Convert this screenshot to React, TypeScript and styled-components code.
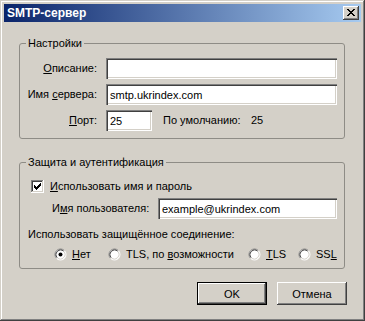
import React from 'react';
import styled, { createGlobalStyle } from 'styled-components';

const Global = createGlobalStyle`
  html, body { margin: 0; padding: 0; background: #d4d0c8; }
  body {
    font-family: "Liberation Sans", Arial, sans-serif;
    font-size: 11px;
    color: #000;
    -webkit-font-smoothing: none;
  }
  * { box-sizing: border-box; }
`;

const Window = styled.div`
  width: 365px;
  height: 321px;
  background: #d4d0c8;
  padding: 4px;
  display: flex;
  flex-direction: column;
  box-shadow: inset -1px -1px #404040, inset 1px 1px #d4d0c8,
    inset -2px -2px #808080, inset 2px 2px #fff;
`;

const TitleBar = styled.div`
  height: 18px;
  display: flex;
  align-items: center;
  padding: 0 2px 0 3px;
  background: linear-gradient(to right, #0a246a, #a6caf0);
`;

const TitleText = styled.span`
  color: #fff;
  font-weight: bold;
  font-size: 12px;
  line-height: 14px;
`;

const CloseButton = styled.div`
  margin-left: auto;
  width: 16px;
  height: 14px;
  background: #d4d0c8;
  box-shadow: inset -1px -1px #404040, inset 1px 1px #fff,
    inset -2px -2px #808080, inset 2px 2px #d4d0c8;
  display: flex;
`;

const Client = styled.div`
  flex: 1;
  display: flex;
  flex-direction: column;
  padding: 15px 14px 0 15px;
`;

const Group = styled.fieldset<{ $top?: number; $pt: number }>`
  margin: ${(p) => p.$top ?? 0}px 2px 0 0;
  padding: ${(p) => p.$pt}px 7px 7px 6px;
  border: 1px solid #8e8c86;
  border-radius: 3px;
  min-width: 0;
`;

const Legend = styled.legend`
  padding: 0 2px;
  line-height: 13px;
  background: #d4d0c8;
`;

const FormGrid = styled.div`
  display: grid;
  grid-template-columns: 71px 1fr;
  column-gap: 9px;
  row-gap: 5px;
  align-items: center;
`;

const Label = styled.label`
  text-align: right;
  white-space: nowrap;
  line-height: 13px;
`;

const Field = styled.input<{ $w?: number }>`
  height: 21px;
  width: ${(p) => (p.$w ? `${p.$w}px` : '100%')};
  flex: ${(p) => (p.$w ? 'none' : '1')};
  min-width: 0;
  border: none;
  outline: none;
  margin: 0;
  padding: 0 3px 0 4px;
  background: #fff;
  font-family: inherit;
  font-size: 11px;
  color: #000;
  box-shadow: inset 1px 1px #808080, inset 2px 2px #404040,
    inset -1px -1px #fff, inset -2px -2px #d4d0c8;
`;

const PortRow = styled.div`
  display: flex;
  align-items: center;
  line-height: 13px;
`;

const DefaultLabel = styled.span`
  margin-left: 11px;
  width: 88px;
  white-space: nowrap;
`;

const CheckRow = styled.label`
  display: flex;
  align-items: center;
  gap: 6px;
  margin-left: 5px;
  height: 13px;
  line-height: 13px;
  white-space: nowrap;
`;

const UserRow = styled.div`
  display: flex;
  align-items: center;
  margin-top: 5px;
  padding-left: 26px;
  line-height: 13px;
`;

const UserLabel = styled.label`
  width: 106px;
  flex: none;
  white-space: nowrap;
`;

const Caption = styled.div`
  margin: 9px 0 0 2px;
  line-height: 13px;
  white-space: nowrap;
`;

const RadioGrid = styled.div`
  display: grid;
  grid-template-columns: 54px 140px 50px auto;
  margin: 7px 0 0 28px;
  height: 13px;
  line-height: 13px;
`;

const RadioItem = styled.label`
  display: flex;
  align-items: center;
  gap: 5px;
  white-space: nowrap;
`;

const ButtonRow = styled.div`
  display: flex;
  justify-content: flex-end;
  gap: 10px;
  margin-top: 13px;
`;

const Button = styled.button<{ $default?: boolean }>`
  width: 70px;
  height: 23px;
  margin: 0;
  padding: 0;
  border: none;
  background: #d4d0c8;
  font-family: inherit;
  font-size: 11px;
  color: #000;
  box-shadow: ${(p) =>
    p.$default
      ? 'inset -1px -1px #000, inset 1px 1px #000, inset -2px -2px #404040, inset 2px 2px #fff, inset -3px -3px #808080, inset 3px 3px #d4d0c8'
      : 'inset -1px -1px #404040, inset 1px 1px #fff, inset -2px -2px #808080, inset 2px 2px #d4d0c8'};
`;

const Key = styled.u`
  text-decoration: underline;
  text-underline-offset: 1px;
`;

const Glyph = styled.svg`
  display: block;
  flex: none;
  shape-rendering: crispEdges;
`;

const CloseIcon = () => (
  <Glyph width={16} height={14} viewBox="0 0 16 14">
    <path
      fill="#000"
      d="M4 3h2v1h-2z M10 3h2v1h-2z M5 4h2v1h-2z M9 4h2v1h-2z M6 5h4v1h-4z M7 6h2v1h-2z M6 7h4v1h-4z M5 8h2v1h-2z M9 8h2v1h-2z M4 9h2v1h-2z M10 9h2v1h-2z"
    />
  </Glyph>
);

const Checkbox = ({ checked }: { checked: boolean }) => (
  <Glyph width={13} height={13} viewBox="0 0 13 13">
    <rect x="0" y="0" width="13" height="13" fill="#fff" />
    <path fill="#808080" d="M0 0h12v1h-11v11h-1z" />
    <path fill="#404040" d="M1 1h10v1h-9v9h-1z" />
    <path fill="#d4d0c8" d="M11 1h1v11h-11v-1h10z" />
    {checked && (
      <path
        fill="#000"
        d="M9 3h1v1h-1z M8 4h2v1h-2z M3 5h1v1h-1z M7 5h3v1h-3z M3 6h2v1h-2z M6 6h3v1h-3z M3 7h5v1h-5z M4 8h3v1h-3z M5 9h1v1h-1z"
      />
    )}
  </Glyph>
);

const Radio = ({ checked }: { checked: boolean }) => (
  <svg width={13} height={13} viewBox="0 0 13 13" style={{ display: 'block', flex: 'none' }}>
    <circle cx="6.5" cy="6.5" r="5.5" fill="#fff" />
    <path d="M2.61 10.39 A5.5 5.5 0 0 1 10.39 2.61" fill="none" stroke="#808080" strokeWidth="1" />
    <path d="M10.39 2.61 A5.5 5.5 0 0 1 2.61 10.39" fill="none" stroke="#fff" strokeWidth="1" />
    <path d="M3.32 9.68 A4.5 4.5 0 0 1 9.68 3.32" fill="none" stroke="#404040" strokeWidth="1" />
    <path d="M9.68 3.32 A4.5 4.5 0 0 1 3.32 9.68" fill="none" stroke="#d4d0c8" strokeWidth="1" />
    {checked && <circle cx="6.5" cy="6.5" r="2" fill="#000" />}
  </svg>
);

export default function App() {
  return (
    <>
      <Global />
      <Window>
        <TitleBar>
          <TitleText>SMTP-сервер</TitleText>
          <CloseButton>
            <CloseIcon />
          </CloseButton>
        </TitleBar>
        <Client>
          <Group $pt={8}>
            <Legend>Настройки</Legend>
            <FormGrid>
              <Label>
                <Key>О</Key>писание:
              </Label>
              <Field defaultValue="" />
              <Label>
                Имя <Key>с</Key>ервера:
              </Label>
              <Field defaultValue="smtp.ukrindex.com" />
              <Label>
                <Key>П</Key>орт:
              </Label>
              <PortRow>
                <Field $w={46} defaultValue="25" />
                <DefaultLabel>По умолчанию:</DefaultLabel>
                <span>25</span>
              </PortRow>
            </FormGrid>
          </Group>
          <Group $top={17} $pt={11}>
            <Legend>Защита и аутентификация</Legend>
            <CheckRow>
              <Checkbox checked />
              <span>
                <Key>И</Key>спользовать имя и пароль
              </span>
            </CheckRow>
            <UserRow>
              <UserLabel>
                И<Key>м</Key>я пользователя:
              </UserLabel>
              <Field defaultValue="example@ukrindex.com" />
            </UserRow>
            <Caption>Использовать защищённое соединение:</Caption>
            <RadioGrid>
              <RadioItem>
                <Radio checked />
                <span>
                  <Key>Н</Key>ет
                </span>
              </RadioItem>
              <RadioItem>
                <Radio checked={false} />
                <span>
                  TLS, по <Key>в</Key>озможности
                </span>
              </RadioItem>
              <RadioItem>
                <Radio checked={false} />
                <span>
                  <Key>T</Key>LS
                </span>
              </RadioItem>
              <RadioItem>
                <Radio checked={false} />
                <span>
                  SS<Key>L</Key>
                </span>
              </RadioItem>
            </RadioGrid>
          </Group>
          <ButtonRow>
            <Button $default>OK</Button>
            <Button>Отмена</Button>
          </ButtonRow>
        </Client>
      </Window>
    </>
  );
}
